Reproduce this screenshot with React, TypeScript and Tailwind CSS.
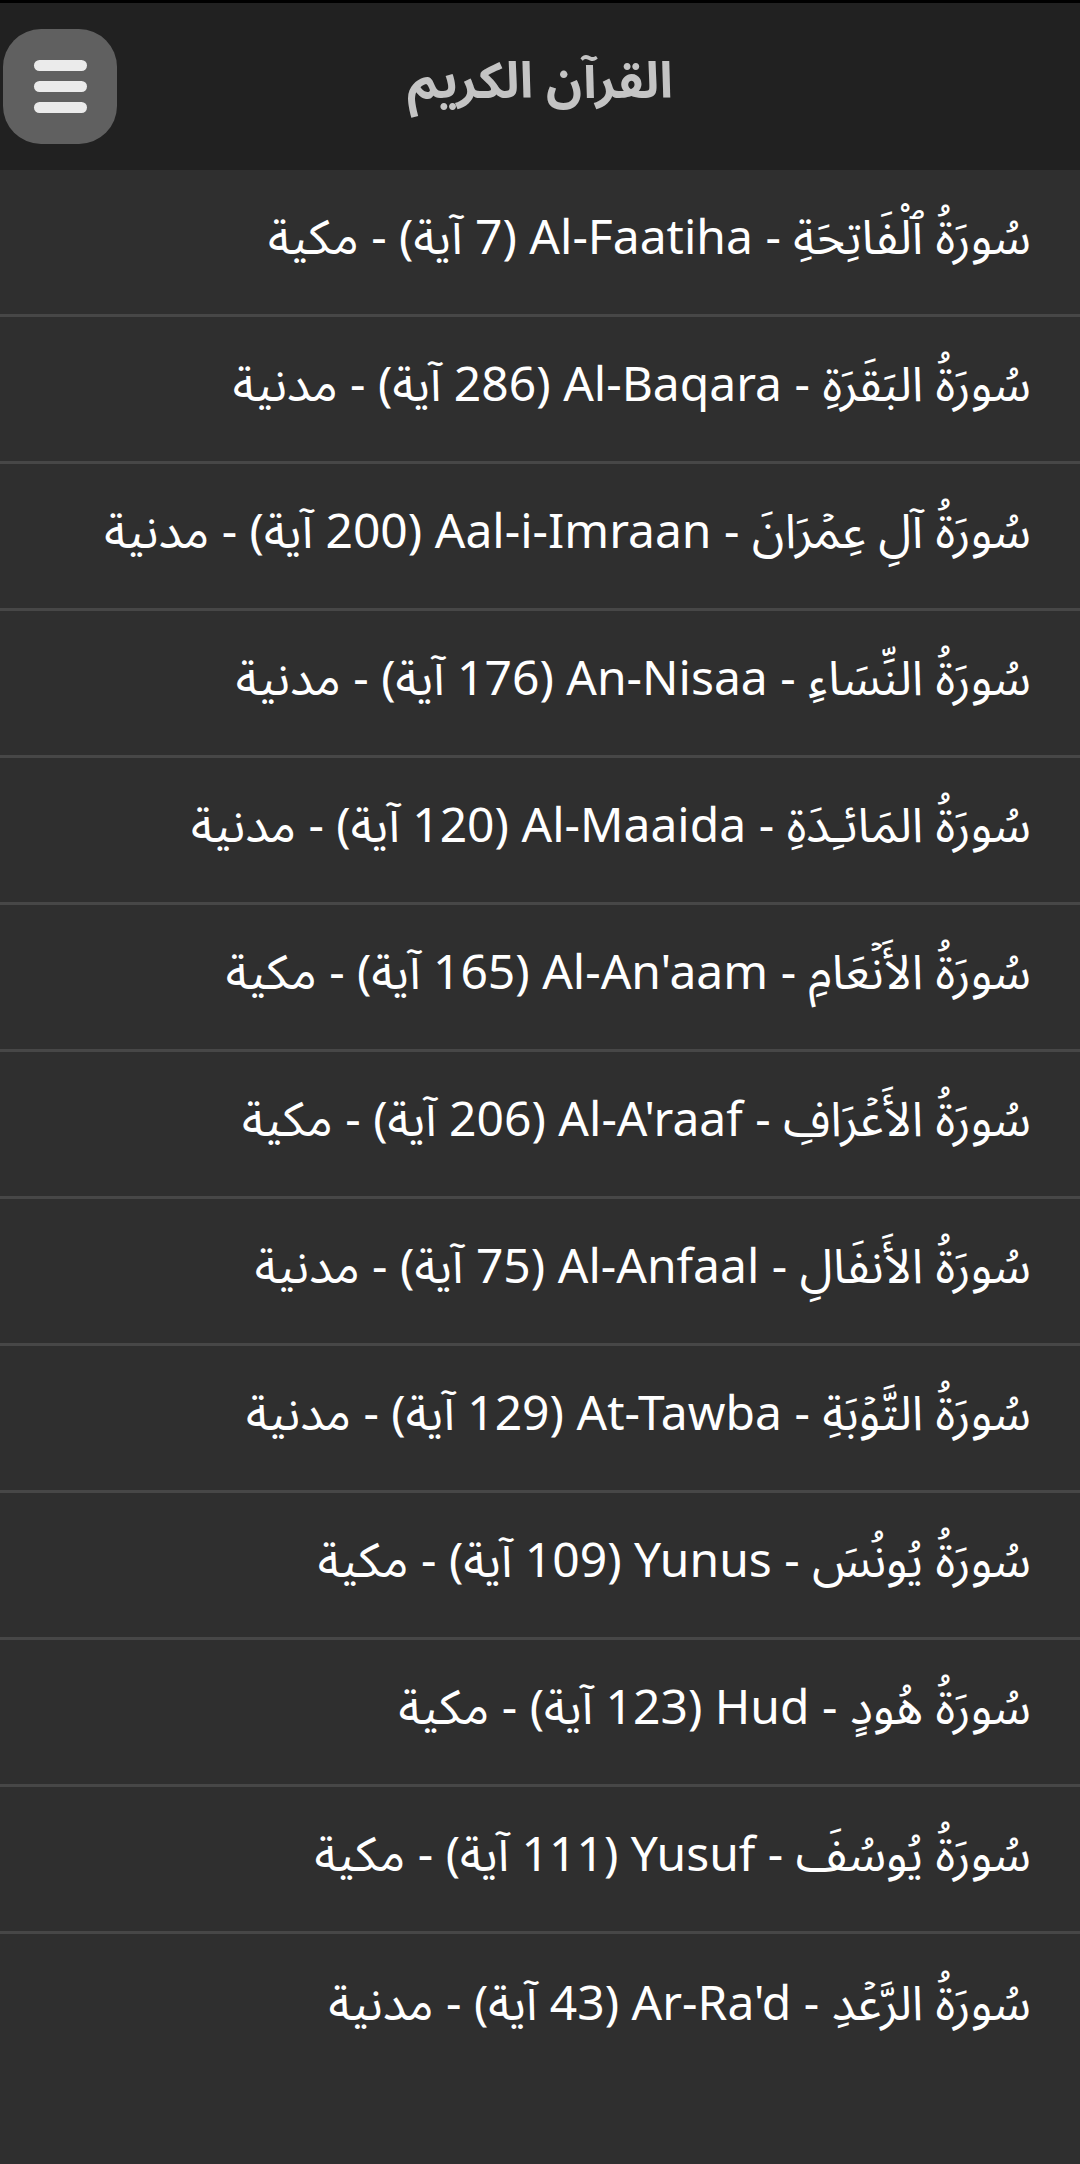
const SURAS: { ar: string; en: string; ayat: number; place: string }[] = [
  { ar: 'سُورَةُ ٱلْفَاتِحَةِ', en: 'Al-Faatiha', ayat: 7, place: 'مكية' },
  { ar: 'سُورَةُ البَقَرَةِ', en: 'Al-Baqara', ayat: 286, place: 'مدنية' },
  { ar: 'سُورَةُ آلِ عِمۡرَانَ', en: 'Aal-i-Imraan', ayat: 200, place: 'مدنية' },
  { ar: 'سُورَةُ النِّسَاءِ', en: 'An-Nisaa', ayat: 176, place: 'مدنية' },
  { ar: 'سُورَةُ المَائـِدَةِ', en: 'Al-Maaida', ayat: 120, place: 'مدنية' },
  { ar: 'سُورَةُ الأَنۡعَامِ', en: "Al-An'aam", ayat: 165, place: 'مكية' },
  { ar: 'سُورَةُ الأَعۡرَافِ', en: "Al-A'raaf", ayat: 206, place: 'مكية' },
  { ar: 'سُورَةُ الأَنفَالِ', en: 'Al-Anfaal', ayat: 75, place: 'مدنية' },
  { ar: 'سُورَةُ التَّوۡبَةِ', en: 'At-Tawba', ayat: 129, place: 'مدنية' },
  { ar: 'سُورَةُ يُونُسَ', en: 'Yunus', ayat: 109, place: 'مكية' },
  { ar: 'سُورَةُ هُودٍ', en: 'Hud', ayat: 123, place: 'مكية' },
  { ar: 'سُورَةُ يُوسُفَ', en: 'Yusuf', ayat: 111, place: 'مكية' },
  { ar: 'سُورَةُ الرَّعۡدِ', en: "Ar-Ra'd", ayat: 43, place: 'مدنية' },
];

function MenuButton() {
  return (
    <button
      type="button"
      aria-label="menu"
      className="ml-[3px] flex h-[115px] w-[114px] shrink-0 flex-col items-center justify-center gap-[10px] rounded-[38px] bg-[#606060]"
    >
      <span className="h-[11px] w-[53px] rounded-full bg-[#ebebeb]" />
      <span className="h-[11px] w-[53px] rounded-full bg-[#ebebeb]" />
      <span className="h-[11px] w-[53px] rounded-full bg-[#ebebeb]" />
    </button>
  );
}

export default function App() {
  return (
    <div className="min-h-[2164px] bg-[#2f2f2f] font-['Noto_Sans_Arabic','DejaVu_Sans',sans-serif]">
      <header className="flex h-[170px] items-center border-t-[3px] border-black bg-[#212121]">
        <MenuButton />
        <h1 dir="rtl" className="flex-1 pb-[8px] text-center text-[50px] font-bold text-[#c4c4c4]">
          القرآن الكريم
        </h1>
        <div className="w-[117px] shrink-0" />
      </header>

      <ul>
        {SURAS.map((s) => (
          <li
            key={s.en}
            className="flex h-[147px] items-center border-b-[3px] border-[#474747] pr-[49px] last:border-b-0"
          >
            <p dir="rtl" className="w-full pb-[6px] text-right text-[48px] leading-none text-white">
              {s.ar} - <bdi>{s.en}</bdi> ({s.ayat} آية) - {s.place}
            </p>
          </li>
        ))}
      </ul>
    </div>
  );
}
